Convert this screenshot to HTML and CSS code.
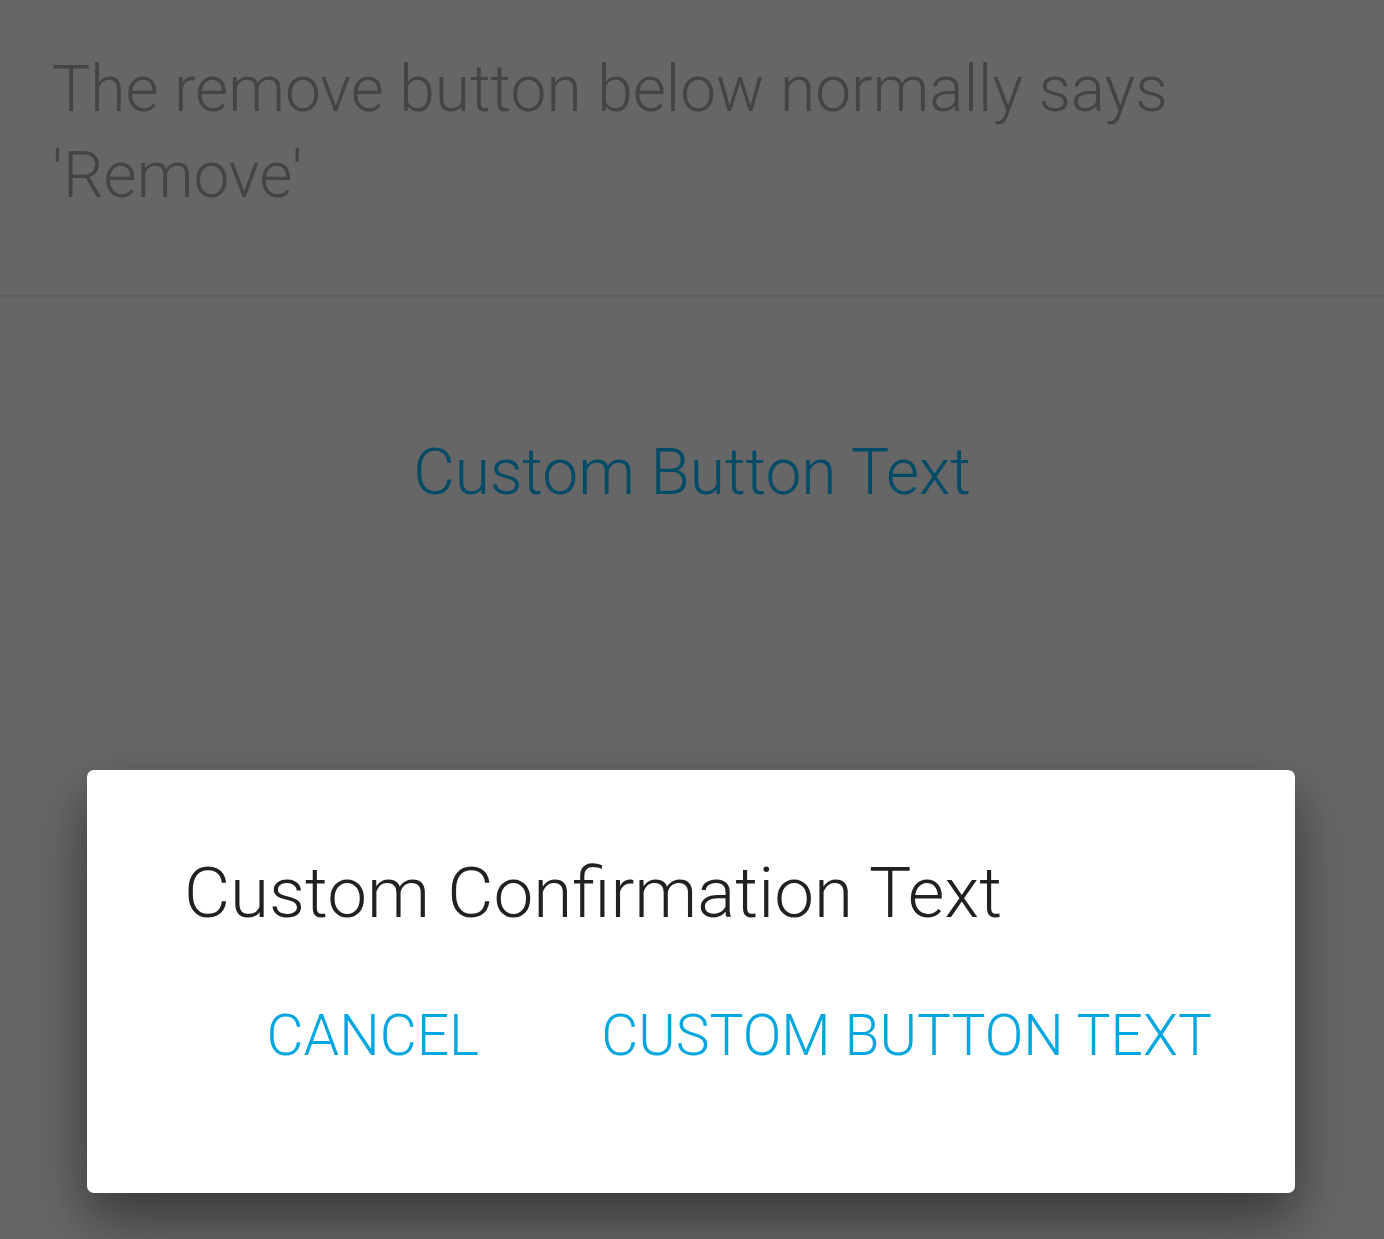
FILE: index.html
```html
<!DOCTYPE html>
<html>
<head>
<meta charset="utf-8">
<link rel="stylesheet" href="styles.css">
</head>
<body>
<div class="page">
  <header class="intro">
    <p class="intro-text">The remove button below normally says 'Remove'</p>
  </header>
  <div class="action-area">
    <button class="link-btn">Custom Button Text</button>
  </div>
</div>
<div class="overlay">
  <div class="dialog">
    <h2 class="dialog-title">Custom Confirmation Text</h2>
    <div class="dialog-actions">
      <button class="dialog-btn">CANCEL</button>
      <button class="dialog-btn">CUSTOM BUTTON TEXT</button>
    </div>
  </div>
</div>
</body>
</html>
```

FILE: styles.css
```css
html, body {
  margin: 0;
  padding: 0;
  height: 100%;
}
body {
  background: #ffffff;
  font-family: Roboto, "Liberation Sans", sans-serif;
  overflow: hidden;
}
.page {
  display: flex;
  flex-direction: column;
}
.intro {
  padding: 47px 52px 0 52px;
  height: 248px;
  border-bottom: 3px solid #ececec;
}
.intro-text {
  margin: 0;
  font-size: 64px;
  font-weight: 300;
  line-height: 86px;
  color: #aaaaaa;
  max-width: 1170px;
}
.action-area {
  display: flex;
  justify-content: center;
  padding-top: 137px;
}
.link-btn {
  border: none;
  background: none;
  padding: 0;
  font-family: Roboto, "Liberation Sans", sans-serif;
  font-size: 64px;
  font-weight: 300;
  color: #05bbff;
}
.overlay {
  position: fixed;
  inset: 0;
  background: rgba(0, 0, 0, 0.6);
  display: flex;
  flex-direction: column;
  justify-content: flex-end;
  align-items: flex-start;
  padding: 0 0 46px 87px;
}
.dialog {
  width: 1208px;
  height: 423px;
  box-sizing: border-box;
  background: #ffffff;
  border-radius: 7px;
  box-shadow: 0 30px 70px rgba(0, 0, 0, 0.32), 0 20px 40px rgba(0, 0, 0, 0.2);
  padding: 80px 83px 0 97px;
}
.dialog-title {
  margin: 0;
  font-size: 71px;
  font-weight: 300;
  line-height: 86px;
  color: #212121;
}
.dialog-actions {
  display: flex;
  justify-content: flex-end;
  gap: 122px;
  margin-top: 66px;
}
.dialog-btn {
  border: none;
  background: none;
  padding: 0;
  font-family: Roboto, "Liberation Sans", sans-serif;
  font-size: 57px;
  font-weight: 300;
  line-height: 68px;
  color: #00a6e0;
}
```
